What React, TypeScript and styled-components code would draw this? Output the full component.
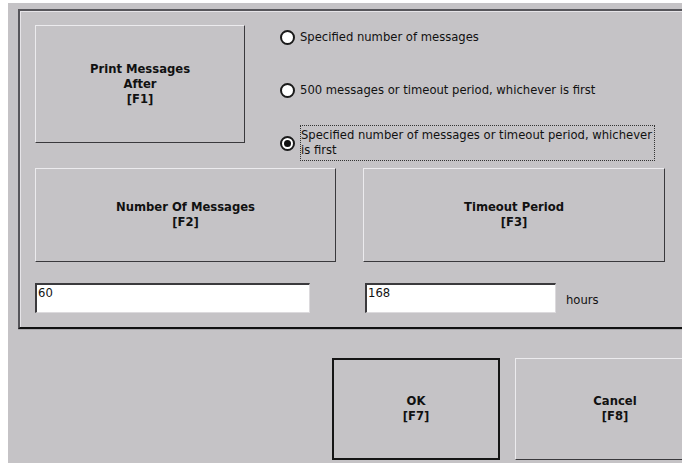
import styled, { createGlobalStyle } from "styled-components"

const Global = createGlobalStyle`
    html, body {
        margin: 0;
        padding: 0;
        background: #ffffff;
        overflow: hidden;
    }
    body {
        font-family: "DejaVu Sans", "Liberation Sans", sans-serif;
        font-size: 11.6px;
        color: #111;
    }
`

const Screen = styled.div`
    margin: 3px 0 0 8px;
    width: 674px;
    height: 460px;
    background: #c5c3c6;
    padding: 6px 0 0 10px;
    box-sizing: border-box;
    overflow: hidden;
`

const Group = styled.div`
    width: 720px;
    height: 320px;
    box-sizing: border-box;
    border-top: 2px solid #56555a;
    border-left: 2px solid #56555a;
    border-bottom: 2px solid #111;
    box-shadow: inset 1px 1px 0 #e6e4e8, 0 1px 0 #a9a7ab;
    padding: 14px 0 0 15px;
    display: flex;
    flex-direction: column;
`

const TopRow = styled.div`
    display: flex;
    align-items: flex-start;
    gap: 35px;
    height: 118px;
`

const KeyButton = styled.div<{ $w: number; $h: number; $focus?: boolean }>`
    width: ${(p) => p.$w}px;
    height: ${(p) => p.$h}px;
    box-sizing: border-box;
    display: flex;
    flex-direction: column;
    align-items: center;
    justify-content: center;
    font-weight: bold;
    line-height: 15px;
    text-align: center;
    border: ${(p) => (p.$focus ? "2px solid #151515" : "1px solid")};
    border-color: ${(p) => (p.$focus ? "#151515" : "#ecebee #3a393c #3a393c #ecebee")};
    background: #c5c3c6;
    flex-shrink: 0;
`

const Options = styled.div`
    display: flex;
    flex-direction: column;
    padding-top: 5px;
`

const Option = styled.div<{ $h: number; $focus?: boolean }>`
    display: flex;
    gap: 5px;
    height: ${(p) => p.$h}px;
    align-items: ${(p) => (p.$focus ? "center" : "flex-start")};
`

const Radio = styled.span<{ $checked?: boolean }>`
    width: 15px;
    height: 15px;
    border-radius: 50%;
    box-sizing: border-box;
    border: 2px solid #1a1a1a;
    background: #fff;
    flex-shrink: 0;
    display: flex;
    align-items: center;
    justify-content: center;
    &::after {
        content: "";
        width: 7px;
        height: 7px;
        border-radius: 50%;
        background: ${(p) => (p.$checked ? "#111" : "transparent")};
    }
`

const OptionText = styled.span<{ $focus?: boolean }>`
    line-height: 15px;
    padding: ${(p) => (p.$focus ? "2px 2px 2px 0" : "0")};
    border: ${(p) => (p.$focus ? "1px dotted #333" : "none")};
    width: ${(p) => (p.$focus ? "355px" : "auto")};
    box-sizing: border-box;
`

const MidRow = styled.div`
    display: flex;
    gap: 27px;
    margin-top: 25px;
`

const InputRow = styled.div`
    display: flex;
    align-items: center;
    margin-top: 21px;
`

const Field = styled.div<{ $w: number }>`
    width: ${(p) => p.$w}px;
    height: 30px;
    box-sizing: border-box;
    background: #fff;
    border-top: 2px solid #3b3a3d;
    border-left: 2px solid #3b3a3d;
    border-right: 1px solid #dcdadd;
    border-bottom: 1px solid #dcdadd;
    padding: 1px 1px;
    line-height: 14px;
`

const Unit = styled.span`
    margin-left: 10px;
    padding-top: 4px;
`

const Footer = styled.div`
    display: flex;
    gap: 15px;
    margin: 29px 0 0 314px;
`

export default function App() {
    return (
        <>
            <Global />
            <Screen>
                <Group>
                    <TopRow>
                        <KeyButton $w={210} $h={118}>
                            <span>Print Messages</span>
                            <span>After</span>
                            <span>[F1]</span>
                        </KeyButton>
                        <Options>
                            <Option $h={53}>
                                <Radio />
                                <OptionText>Specified number of messages</OptionText>
                            </Option>
                            <Option $h={42}>
                                <Radio />
                                <OptionText>500 messages or timeout period, whichever is first</OptionText>
                            </Option>
                            <Option $h={36} $focus>
                                <Radio $checked />
                                <OptionText $focus>
                                    Specified number of messages or timeout period, whichever is first
                                </OptionText>
                            </Option>
                        </Options>
                    </TopRow>
                    <MidRow>
                        <KeyButton $w={301} $h={94}>
                            <span>Number Of Messages</span>
                            <span>[F2]</span>
                        </KeyButton>
                        <KeyButton $w={302} $h={94}>
                            <span>Timeout Period</span>
                            <span>[F3]</span>
                        </KeyButton>
                    </MidRow>
                    <InputRow>
                        <Field $w={275}>60</Field>
                        <Field $w={191} style={{ marginLeft: 55 }}>168</Field>
                        <Unit>hours</Unit>
                    </InputRow>
                </Group>
                <Footer>
                    <KeyButton $w={168} $h={102} $focus>
                        <span>OK</span>
                        <span>[F7]</span>
                    </KeyButton>
                    <KeyButton $w={200} $h={102}>
                        <span>Cancel</span>
                        <span>[F8]</span>
                    </KeyButton>
                </Footer>
            </Screen>
        </>
    )
}
